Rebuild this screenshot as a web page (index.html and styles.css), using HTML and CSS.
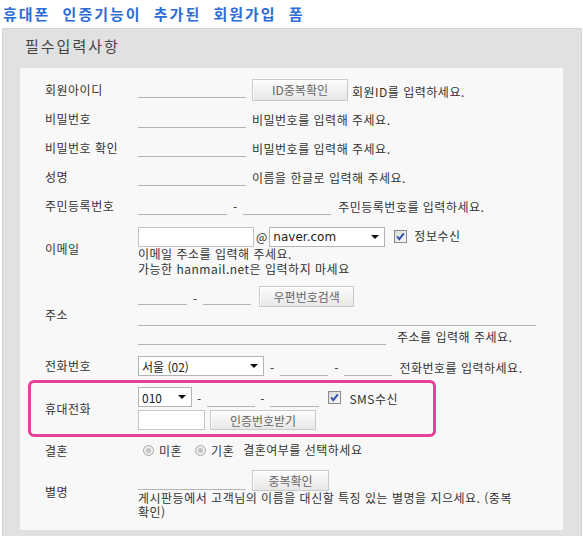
FILE: index.html
```html
<!DOCTYPE html>
<html lang="ko">
<head>
<meta charset="utf-8">
<title>휴대폰 인증기능이 추가된 회원가입 폼</title>
<link rel="stylesheet" href="styles.css">
</head>
<body>
<h1 class="title">휴대폰 인증기능이 추가된 회원가입 폼</h1>
<div class="box">
  <h2 class="box-head">필수입력사항</h2>
  <div class="panel">

    <div class="row h29">
      <div class="label">회원아이디</div>
      <div class="field">
        <div class="line">
          <input class="uline w108 lift3" type="text">
          <button class="btn btn-id" type="button">ID중복확인</button>
          <span class="help lift2">회원ID를 입력하세요.</span>
        </div>
      </div>
    </div>

    <div class="row h29">
      <div class="label">비밀번호</div>
      <div class="field">
        <div class="line">
          <input class="uline w108" type="password">
          <span class="help gap6">비밀번호를 입력해 주세요.</span>
        </div>
      </div>
    </div>

    <div class="row h29">
      <div class="label">비밀번호 확인</div>
      <div class="field">
        <div class="line">
          <input class="uline w108" type="password">
          <span class="help gap6">비밀번호를 입력해 주세요.</span>
        </div>
      </div>
    </div>

    <div class="row h29">
      <div class="label">성명</div>
      <div class="field">
        <div class="line">
          <input class="uline w108" type="text">
          <span class="help gap6">이름을 한글로 입력해 주세요.</span>
        </div>
      </div>
    </div>

    <div class="row h29">
      <div class="label">주민등록번호</div>
      <div class="field">
        <div class="line">
          <input class="uline w89" type="text">
          <span class="dash">-</span>
          <input class="uline w88" type="password">
          <span class="help gap7">주민등록번호를 입력하세요.</span>
        </div>
      </div>
    </div>

    <div class="row h58">
      <div class="label">이메일</div>
      <div class="field push4">
        <div class="line mid">
          <input class="boxin w116" type="text">
          <span class="at">@</span>
          <div class="select sel-mail">
            <select><option>naver.com</option><option>daum.net</option><option>gmail.com</option></select>
            <span class="caret"></span>
          </div>
          <svg class="chk chk-mail" width="13" height="13" viewBox="0 0 13 13"><defs><linearGradient id="cg1" x1="0" y1="0" x2="1" y2="1"><stop offset="0" stop-color="#d6d6d6"/><stop offset="1" stop-color="#fbfbfb"/></linearGradient></defs><rect x="0.5" y="0.5" width="12" height="12" fill="url(#cg1)" stroke="#8c8c8c"/><path d="M3.2 6.4 L5.3 9.2 L9.8 3.4" fill="none" stroke="#2f4fae" stroke-width="1.9"/></svg>
          <span class="help">정보수신</span>
        </div>
        <div class="note note-mail">
          <div>이메일 주소를 입력해 주세요.</div>
          <div>가능한 hanmail.net은 입력하지 마세요</div>
        </div>
      </div>
    </div>

    <div class="row h74">
      <div class="label">주소</div>
      <div class="field">
        <div class="line">
          <input class="uline w49 lift2" type="text">
          <span class="dash lift3">-</span>
          <input class="uline w48 lift2" type="text">
          <button class="btn btn-zip" type="button">우편번호검색</button>
        </div>
        <div class="line">
          <input class="uline w398" type="text">
        </div>
        <div class="line">
          <input class="uline w248" type="text">
          <span class="help gap11">주소를 입력해 주세요.</span>
        </div>
      </div>
    </div>

    <div class="row h28">
      <div class="label">전화번호</div>
      <div class="field">
        <div class="line">
          <div class="select sel-tel">
            <select><option>서울 (02)</option><option>경기 (031)</option><option>인천 (032)</option></select>
            <span class="caret"></span>
          </div>
          <span class="dash">-</span>
          <input class="uline w48" type="text">
          <span class="dash">-</span>
          <input class="uline w48" type="text">
          <span class="help gap7">전화번호를 입력하세요.</span>
        </div>
      </div>
    </div>

    <div class="row mobile">
      <div class="label">휴대전화</div>
      <div class="field">
        <div class="line">
          <div class="select sel-hp">
            <select><option>010</option><option>011</option><option>016</option></select>
            <span class="caret"></span>
          </div>
          <span class="dash dash-hp">-</span>
          <input class="uline w48" type="text">
          <span class="dash dash-hp">-</span>
          <input class="uline w49" type="text">
          <svg class="chk chk-sms" width="13" height="13" viewBox="0 0 13 13"><defs><linearGradient id="cg2" x1="0" y1="0" x2="1" y2="1"><stop offset="0" stop-color="#d6d6d6"/><stop offset="1" stop-color="#fbfbfb"/></linearGradient></defs><rect x="0.5" y="0.5" width="12" height="12" fill="url(#cg2)" stroke="#8c8c8c"/><path d="M3.2 6.4 L5.3 9.2 L9.8 3.4" fill="none" stroke="#2f4fae" stroke-width="1.9"/></svg>
          <span class="help">SMS수신</span>
        </div>
        <div class="line line2">
          <input class="boxin w67" type="text">
          <button class="btn btn-auth" type="button">인증번호받기</button>
        </div>
      </div>
    </div>

    <div class="row h27">
      <div class="label">결혼</div>
      <div class="field">
        <div class="line mid">
          <span class="radio r-first"></span>
          <span class="opt opt-single">미혼</span>
          <span class="radio"></span>
          <span class="opt opt-married">기혼</span>
          <span class="help">결혼여부를 선택하세요</span>
        </div>
      </div>
    </div>

    <div class="row h55">
      <div class="label">별명</div>
      <div class="field top6">
        <div class="line">
          <input class="uline w108 lift1" type="text">
          <button class="btn btn-dup" type="button">중복확인</button>
        </div>
        <div class="note">게시판등에서 고객님의 이름을 대신할 특징 있는 별명을 지으세요. (중복 확인)</div>
      </div>
    </div>

  </div>
</div>
</body>
</html>
```

FILE: styles.css
```css
* { box-sizing: border-box; }

body {
  margin: 0;
  font-family: "Noto Sans CJK KR", "Noto Sans", sans-serif;
  font-size: 12px;
  color: #333;
  background: #fff;
}

.title {
  margin: 0;
  padding-left: 3px;
  font-size: 15px;
  line-height: 28px;
  font-weight: bold;
  color: #2e6dd6;
  letter-spacing: 2px;
  word-spacing: 6px;
}

.box {
  margin-left: 2px;
  width: 580px;
  border: 1px solid #d4d4d4;
  background: #e1e1e1;
  padding: 0 18px 10px 17px;
}

.box-head {
  margin: 0;
  padding: 7px 0 12px 5px;
  font-size: 15px;
  font-weight: normal;
  line-height: 20px;
  letter-spacing: 2px;
  color: #444;
}

.panel {
  background: #f8f8f8;
  padding: 7px 20px 11px 0;
  letter-spacing: 0.5px;
}

.row { display: flex; align-items: center; }
.h27 { height: 27px; }
.h28 { height: 28px; }
.h29 { height: 29px; }
.h55 { height: 55px; }
.h58 { height: 58px; }
.h74 { height: 74px; }

.label {
  flex: none;
  width: 118px;
  padding-left: 25px;
  line-height: 14px;
}

.field { flex: 1; min-width: 0; }
.push4 { padding-top: 4px; }
.top6 { align-self: flex-start; margin-top: 6px; }

.line { display: flex; align-items: flex-end; }
.line.mid { align-items: center; }
.line2 { margin-top: 3px; }

.help { line-height: 14px; margin-bottom: 1px; white-space: nowrap; }
.gap6 { margin-left: 6px; }
.gap7 { margin-left: 7px; }
.gap11 { margin-left: 11px; }

.note { line-height: 14px; word-break: keep-all; }
.note-mail { line-height: 15px; margin-top: -1px; }

.lift1 { margin-bottom: 1px; }
.lift2 { margin-bottom: 2px; }
.lift3 { margin-bottom: 3px; }

.uline {
  flex: none;
  height: 19px;
  border: 0;
  border-bottom: 1px solid #b4b4b4;
  background: transparent;
  padding: 0 2px;
  font: inherit;
  color: #333;
  outline: none;
}

.boxin {
  flex: none;
  height: 20px;
  border: 1px solid #c4c4c4;
  background: #fff;
  padding: 0 2px;
  font: inherit;
  outline: none;
}

.w48 { width: 48px; }
.w49 { width: 49px; }
.w67 { width: 67px; }
.w88 { width: 88px; }
.w89 { width: 89px; }
.w108 { width: 108px; }
.w116 { width: 116px; }
.w248 { width: 248px; }
.w398 { width: 398px; }

.dash {
  flex: none;
  line-height: 14px;
  margin: 0 6px 1px 6px;
  letter-spacing: 0;
}
.dash-hp { margin: 0 6px 1px 5px; }

.at { margin: 0 2px; line-height: 14px; letter-spacing: 0; }

.select {
  flex: none;
  display: flex;
  align-items: center;
  height: 20px;
  border: 1px solid #b3b3b3;
  background: #fff;
}
.select select {
  -webkit-appearance: none;
  appearance: none;
  flex: 1;
  min-width: 0;
  height: 18px;
  border: 0;
  background: transparent;
  padding: 0 0 0 3px;
  font: inherit;
  color: #222;
  outline: none;
}
.sel-mail { width: 116px; }
.sel-mail select { font-family: "DejaVu Sans", sans-serif; font-size: 12px; letter-spacing: 0; }
.sel-tel { width: 126px; }
.sel-hp { width: 54px; }

.caret {
  flex: none;
  width: 0;
  height: 0;
  border-left: 4px solid transparent;
  border-right: 4px solid transparent;
  border-top: 4px solid #111;
  margin: 0 5px 0 3px;
}

.chk { flex: none; display: block; }
.chk-mail { margin: 0 7px 0 9px; }
.chk-sms { margin: 0 8px 3px 9px; }

.btn {
  flex: none;
  border: 1px solid #c9c9c9;
  background: linear-gradient(#fcfcfc, #e7e7e7);
  box-shadow: inset 1px 1px 0 #fff;
  font: inherit;
  color: #666;
  padding: 0;
  cursor: pointer;
}
.btn-id { width: 96px; height: 22px; margin: 0 4px 0 6px; }
.btn-zip { width: 95px; height: 21px; margin-left: 8px; }
.btn-auth { width: 106px; height: 20px; margin-left: 5px; }
.btn-dup { width: 77px; height: 21px; margin-left: 6px; }

.mobile {
  margin-left: 8px;
  width: 408px;
  border: 3px solid #e6409a;
  border-radius: 6px;
  padding: 4px 0;
}
.mobile .label { width: 107px; padding-left: 14px; }

.radio {
  flex: none;
  width: 11px;
  height: 11px;
  border-radius: 50%;
  border: 1px solid #a6a6a6;
  background: radial-gradient(circle, #c4c4c4 0, #c4c4c4 2px, #ececec 3px, #f6f6f6 100%);
  margin-right: 5px;
}
.r-first { margin-left: 5px; }
.opt { line-height: 14px; }
.opt-single { margin-right: 13px; }
.opt-married { margin-right: 9px; }
```
